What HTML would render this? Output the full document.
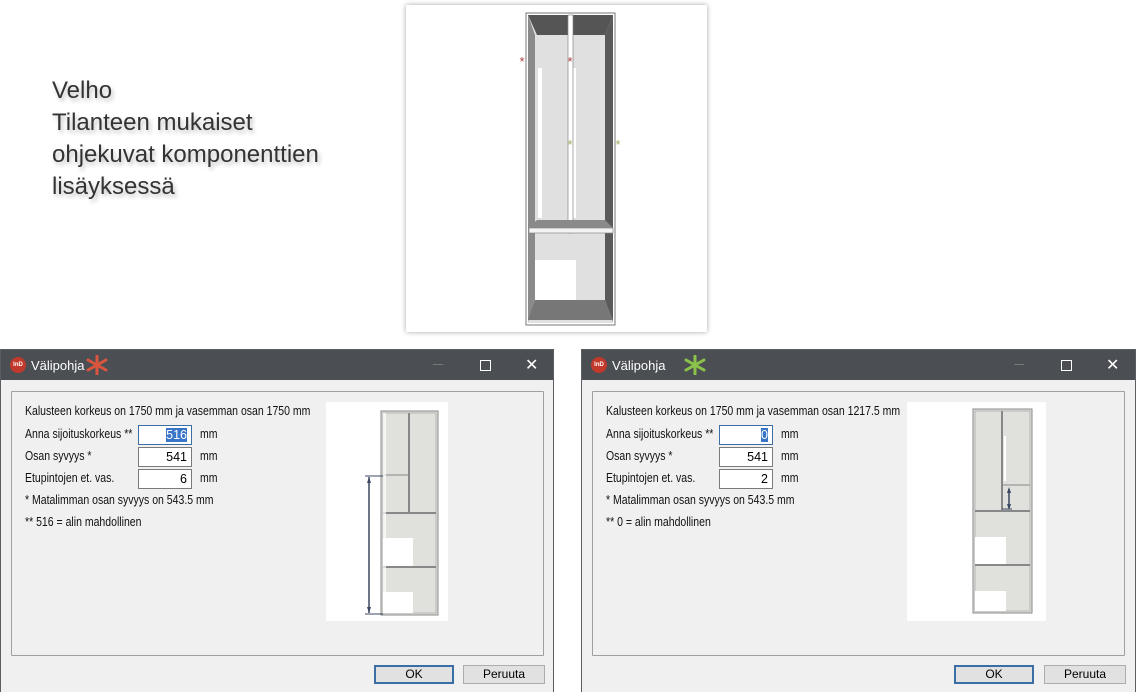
<!DOCTYPE html>
<html><head><meta charset="utf-8">
<style>
*{margin:0;padding:0;box-sizing:border-box}
body{width:1140px;height:692px;background:#fff;position:relative;overflow:hidden;font-family:"Liberation Sans",sans-serif}
.big{position:absolute;left:52px;top:75px;font-size:24px;line-height:32px;color:#333;text-shadow:2px 3px 4px rgba(0,0,0,.25)}
.top{position:absolute;left:406px;top:5px;width:301px;height:327px;background:#fff;box-shadow:0 0 5px rgba(0,0,0,.35)}
.dlg{position:absolute;top:349px;height:343px;background:#f0f0f0;border:1px solid #5a5e63;border-bottom:none}
.tb{position:absolute;left:0;top:0;right:0;height:30px;background:#4b4f54;color:#fff;font-size:13px}
.tb .t{position:absolute;left:30px;top:8px}
.ic{position:absolute;left:9px;top:7px;width:16px;height:16px;border-radius:50%;background:#c0392b;color:#fff;font-size:6px;font-weight:bold;text-align:center;line-height:16px}
.grp{position:absolute;left:10px;top:41px;border:1px solid #a0a0a0;border-radius:1px}
.lbl{position:absolute;font-size:12.5px;color:#111;white-space:nowrap;transform:scaleX(0.84);transform-origin:0 0}
.inp{position:absolute;width:54px;height:20px;background:#fff;border:1px solid #7a7a7a;font-size:12.5px;text-align:right;padding-right:4px;line-height:18px}
.btn{position:absolute;top:315px;height:19px;background:#e1e1e1;border:1px solid #adadad;font-size:12px;text-align:center;line-height:17px}
.ok{border:2px solid #3a6ea5;line-height:15px}
.ctl{position:absolute;top:6px;color:#fff}
</style></head><body>
<div class="big">Velho<br>Tilanteen mukaiset<br>ohjekuvat komponenttien<br>lisäyksessä</div>

<div class="top">
<svg width="301" height="327" viewBox="406 5 301 327" style="position:absolute;left:0;top:0">
<rect x="526" y="13" width="89" height="312" fill="#fff" stroke="#777" stroke-width="1"/>
<rect x="528" y="15" width="85" height="308" fill="#e0e0e0"/>
<polygon points="528,15 613,15 605,35 537,35" fill="#555"/>
<polygon points="528,15 535,35 535,300 528,322" fill="#8a8a8a"/>
<polygon points="613,15 605,35 605,300 613,322" fill="#5a5a5a"/>
<rect x="538" y="68" width="4" height="150" fill="#fff"/>
<rect x="573" y="68" width="3" height="150" fill="#fff"/>
<rect x="568" y="15" width="5" height="218" fill="#fff" stroke="#888" stroke-width=".7"/>
<polygon points="537,220 605,220 613,228 528,228" fill="#8a8a8a"/>
<rect x="529" y="228" width="84" height="5" fill="#f4f4f4" stroke="#888" stroke-width=".7"/>
<rect x="535" y="260" width="41" height="40" fill="#fff"/>
<polygon points="535,300 605,300 613,320 528,320" fill="#777"/>
<text x="522" y="66" font-size="13" fill="#b04040" text-anchor="middle">*</text>
<text x="570" y="66" font-size="13" fill="#b04040" text-anchor="middle">*</text>
<text x="570" y="149" font-size="13" fill="#9ab060" text-anchor="middle">*</text>
<text x="618" y="149" font-size="13" fill="#9ab060" text-anchor="middle">*</text>
</svg>
</div>

<!-- dialog 1 -->
<div class="dlg" style="left:0;width:554px">
<div class="tb"><div class="ic">InD</div><div class="t">Välipohja</div>
<svg style="position:absolute;left:85px;top:5px" width="22" height="20" viewBox="0 0 22 20"><g stroke="#d9553d" stroke-width="3" stroke-linecap="round"><line x1="11" y1="1" x2="11" y2="19"/><line x1="2" y1="5" x2="20" y2="15"/><line x1="2" y1="15" x2="20" y2="5"/></g></svg>
<div class="ctl" style="left:432px;top:14px;width:10px;height:1px;background:#777"></div>
<div class="ctl" style="left:479px;top:10px;width:11px;height:11px;border:1px solid #fff"></div>
<div class="ctl" style="left:524px;top:5px;font-size:16px">✕</div></div>
<div class="grp" style="width:533px;height:265px"></div>
<div class="lbl" style="left:24px;top:54px">Kalusteen korkeus on 1750 mm ja vasemman osan 1750 mm</div>
<div class="lbl" style="left:24px;top:77px">Anna sijoituskorkeus **</div>
<div class="inp" style="left:137px;top:75px;border-color:#3a6ea5"><span style="background:#3874c8;color:#fff">516</span></div>
<div class="lbl" style="left:199px;top:77px">mm</div>
<div class="lbl" style="left:24px;top:99px">Osan syvyys *</div>
<div class="inp" style="left:137px;top:97px">541</div>
<div class="lbl" style="left:199px;top:99px">mm</div>
<div class="lbl" style="left:24px;top:121px">Etupintojen et. vas.</div>
<div class="inp" style="left:137px;top:119px">6</div>
<div class="lbl" style="left:199px;top:121px">mm</div>
<div class="lbl" style="left:24px;top:143px">* Matalimman osan syvyys on 543.5 mm</div>
<div class="lbl" style="left:24px;top:165px">** 516 = alin mahdollinen</div>
<svg style="position:absolute;left:325px;top:52px" width="122" height="219" viewBox="326 402 122 219">
<rect x="326" y="402" width="122" height="219" fill="#fff"/>
<rect x="381" y="411" width="57" height="204" fill="#e0e0dd" stroke="#888" stroke-width="1"/>
<rect x="383" y="413" width="53" height="200" fill="none" stroke="#999" stroke-width=".6"/>
<line x1="409" y1="413" x2="409" y2="513" stroke="#888" stroke-width="2"/>
<line x1="383" y1="475" x2="408" y2="475" stroke="#888"/>
<line x1="383" y1="513" x2="436" y2="513" stroke="#888" stroke-width="2"/>
<line x1="383" y1="567" x2="436" y2="567" stroke="#888" stroke-width="2"/>
<rect x="383" y="538" width="30" height="28" fill="#fff"/>
<rect x="383" y="592" width="30" height="21" fill="#fff"/>
<rect x="383" y="413" width="3" height="200" fill="#fff" opacity=".7"/>
<line x1="369" y1="477" x2="369" y2="613" stroke="#3b4760" stroke-width="1.5"/>
<line x1="365" y1="476" x2="383" y2="476" stroke="#3b4760"/>
<line x1="365" y1="614" x2="383" y2="614" stroke="#3b4760"/>
<polygon points="369,477 367,483 371,483" fill="#3b4760"/>
<polygon points="369,613 367,607 371,607" fill="#3b4760"/>
</svg>
<div class="btn ok" style="left:373px;width:80px">OK</div>
<div class="btn" style="left:462px;width:82px">Peruuta</div>
</div>

<!-- dialog 2 -->
<div class="dlg" style="left:581px;width:555px">
<div class="tb"><div class="ic">InD</div><div class="t">Välipohja</div>
<svg style="position:absolute;left:102px;top:5px" width="22" height="20" viewBox="0 0 22 20"><g stroke="#8bc34a" stroke-width="3" stroke-linecap="round"><line x1="11" y1="1" x2="11" y2="19"/><line x1="2" y1="5" x2="20" y2="15"/><line x1="2" y1="15" x2="20" y2="5"/></g></svg>
<div class="ctl" style="left:432px;top:14px;width:10px;height:1px;background:#777"></div>
<div class="ctl" style="left:479px;top:10px;width:11px;height:11px;border:1px solid #fff"></div>
<div class="ctl" style="left:524px;top:5px;font-size:16px">✕</div></div>
<div class="grp" style="width:533px;height:265px"></div>
<div class="lbl" style="left:24px;top:54px">Kalusteen korkeus on 1750 mm ja vasemman osan 1217.5 mm</div>
<div class="lbl" style="left:24px;top:77px">Anna sijoituskorkeus **</div>
<div class="inp" style="left:137px;top:75px;border-color:#3a6ea5"><span style="background:#3874c8;color:#fff">0</span></div>
<div class="lbl" style="left:199px;top:77px">mm</div>
<div class="lbl" style="left:24px;top:99px">Osan syvyys *</div>
<div class="inp" style="left:137px;top:97px">541</div>
<div class="lbl" style="left:199px;top:99px">mm</div>
<div class="lbl" style="left:24px;top:121px">Etupintojen et. vas.</div>
<div class="inp" style="left:137px;top:119px">2</div>
<div class="lbl" style="left:199px;top:121px">mm</div>
<div class="lbl" style="left:24px;top:143px">* Matalimman osan syvyys on 543.5 mm</div>
<div class="lbl" style="left:24px;top:165px">** 0 = alin mahdollinen</div>
<svg style="position:absolute;left:325px;top:52px" width="139" height="219" viewBox="907 402 139 219">
<rect x="907" y="402" width="139" height="219" fill="#fff"/>
<rect x="973" y="409" width="59" height="204" fill="#e0e0dd" stroke="#888" stroke-width="1"/>
<rect x="975" y="411" width="55" height="200" fill="none" stroke="#999" stroke-width=".6"/>
<line x1="1002" y1="411" x2="1002" y2="510" stroke="#888" stroke-width="2"/>
<line x1="1003" y1="485" x2="1030" y2="485" stroke="#888"/>
<line x1="975" y1="511" x2="1030" y2="511" stroke="#888" stroke-width="2"/>
<line x1="975" y1="565" x2="1030" y2="565" stroke="#888" stroke-width="2"/>
<rect x="975" y="537" width="31" height="27" fill="#fff"/>
<rect x="975" y="591" width="31" height="20" fill="#fff"/>
<rect x="1004" y="436" width="2" height="45" fill="#fff"/>
<line x1="1009" y1="489" x2="1009" y2="508" stroke="#3b4760" stroke-width="1.5"/>
<polygon points="1009,487 1007,493 1011,493" fill="#3b4760"/>
<polygon points="1009,510 1007,504 1011,504" fill="#3b4760"/>
<line x1="1002" y1="509" x2="1012" y2="509" stroke="#3b4760"/>
</svg>
<div class="btn ok" style="left:372px;width:80px">OK</div>
<div class="btn" style="left:462px;width:82px">Peruuta</div>
</div>
</body></html>
